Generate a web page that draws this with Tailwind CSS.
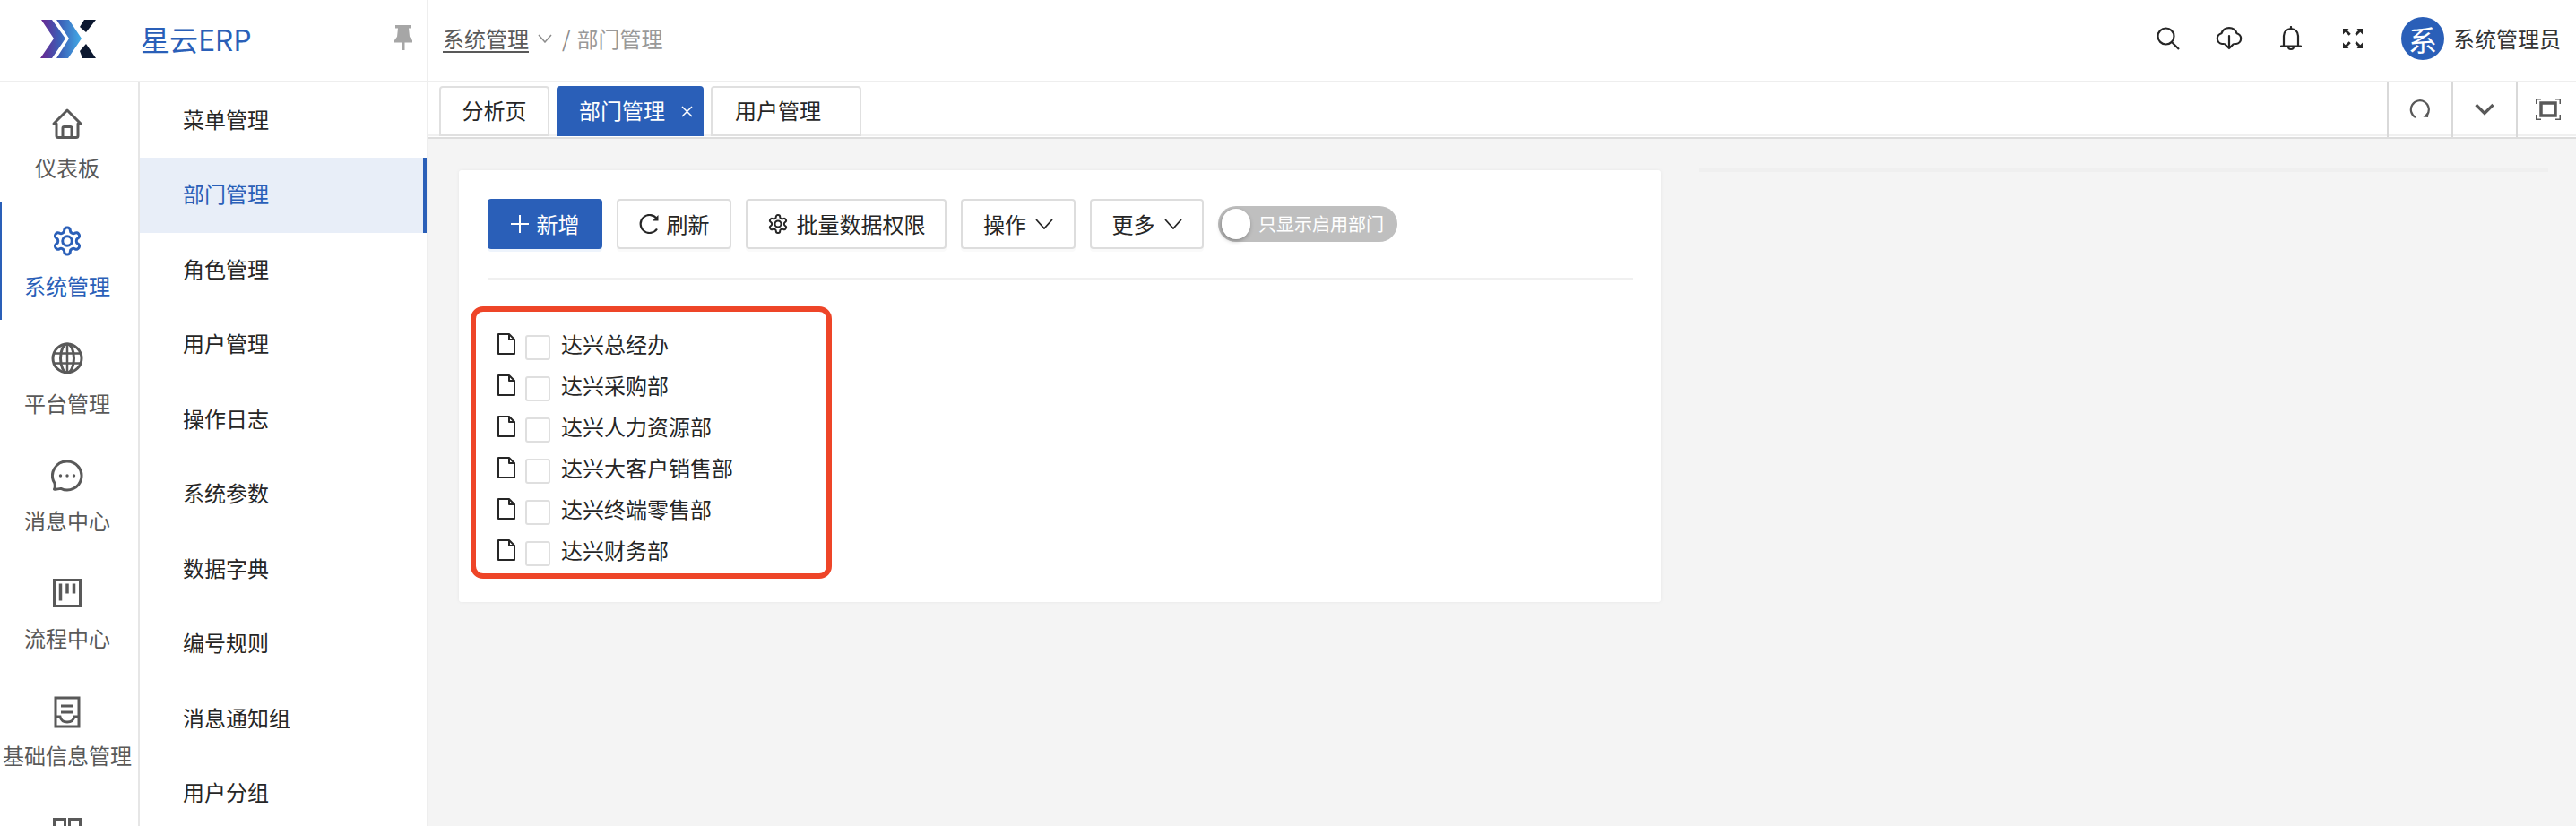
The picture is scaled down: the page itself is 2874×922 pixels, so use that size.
<!DOCTYPE html>
<html lang="zh-CN">
<head>
  <meta charset="UTF-8" />
  <title>星云ERP</title>
  <script src="https://cdn.jsdelivr.net/npm/@tailwindcss/browser@4"></script>
</head>
<body class="bg-white text-[#333] font-['Noto_Sans_CJK_SC','Noto_Sans',sans-serif] h-screen overflow-hidden">
<div class="flex h-[922px] w-[2874px] overflow-hidden">

  <!-- left column: logo + menus -->
  <aside class="w-[476px] shrink-0 flex flex-col">
    <div class="h-[92px] shrink-0 border-b-2 border-[#eeeeee] flex items-center">
      <svg class="ml-[45px] w-[62px] h-[44px] -mt-[4px]" viewBox="45 21 62 44">
        <defs>
          <linearGradient id="logoA" gradientUnits="userSpaceOnUse" x1="45" y1="0" x2="92" y2="0">
            <stop offset="0" stop-color="#6b2590" />
            <stop offset="0.45" stop-color="#3c5db5" />
            <stop offset="1" stop-color="#43b0ea" />
          </linearGradient>
        </defs>
        <polygon fill="url(#logoA)" points="46,22 58,22 73,43 58,65 45,65 60,43" />
        <polygon fill="url(#logoA)" points="63,22 77,22 91,43 76,65 63,65 77,43" />
        <polygon fill="#0c1830" points="94,22 107,22 96,36 89,30" />
        <polygon fill="#0c1830" points="96,49 107,65 92,65 89,57" />
      </svg>
      <span class="ml-[50px] text-[32px] leading-none text-[#2a5fb8] -mt-[4px]">星云ERP</span>
      <svg class="ml-[160px] w-[20px] h-[28px] -mt-[6px]" viewBox="0 0 20 28" fill="#a6a6a6">
        <path d="M1 0h18v3.5h-3l1 9.5 3 4v2.500H11.500V28h-3V19.500H0V17l3-4 1-9.500H1z" />
      </svg>
    </div>
    <div class="flex flex-1 min-h-0">
      <!-- first level -->
      <nav class="w-[156px] shrink-0 border-r-2 border-[#e6e6e6] pt-[3px] text-[#595959] overflow-hidden">
        <a class="h-[131px] flex flex-col items-center pt-[26px] pr-[4px]">
          <svg class="w-[34px] h-[34px]" viewBox="0 0 34 34" fill="none" stroke="#595959" stroke-width="3" stroke-linejoin="round">
            <path d="M17 2 32 17h-3v13.500a2 2 0 0 1-2 2H7a2 2 0 0 1-2-2V17H2z" />
            <path d="M12 32V22a1.500 1.500 0 0 1 1.500-1.500h7A1.500 1.500 0 0 1 22 22v10" />
          </svg>
          <span class="mt-[20px] text-[24px] leading-none whitespace-nowrap">仪表板</span>
        </a>
        <a class="h-[131px] flex flex-col items-center pt-[26px] border-l-2 border-[#2a5fb8] text-[#2a5fb8] pr-[6px]">
          <svg class="w-[36px] h-[36px] -my-[1px]" viewBox="0 0 24 24" fill="none" stroke="#2a5fb8" stroke-width="2" stroke-linejoin="round">
            <path d="M12.220 2h-.44a2 2 0 0 0-2 2v.18a2 2 0 0 1-1 1.730l-.43.25a2 2 0 0 1-2 0l-.15-.08a2 2 0 0 0-2.730.73l-.22.38a2 2 0 0 0 .73 2.730l.15.1a2 2 0 0 1 1 1.720v.51a2 2 0 0 1-1 1.740l-.15.09a2 2 0 0 0-.73 2.730l.22.38a2 2 0 0 0 2.730.73l.15-.08a2 2 0 0 1 2 0l.43.25a2 2 0 0 1 1 1.730V20a2 2 0 0 0 2 2h.44a2 2 0 0 0 2-2v-.18a2 2 0 0 1 1-1.730l.43-.25a2 2 0 0 1 2 0l.15.08a2 2 0 0 0 2.730-.73l.22-.39a2 2 0 0 0-.73-2.730l-.15-.08a2 2 0 0 1-1-1.740v-.5a2 2 0 0 1 1-1.740l.15-.09a2 2 0 0 0 .73-2.730l-.22-.38a2 2 0 0 0-2.730-.73l-.15.08a2 2 0 0 1-2 0l-.43-.25a2 2 0 0 1-1-1.730V4a2 2 0 0 0-2-2z" />
            <circle cx="12" cy="12" r="3.500" />
          </svg>
          <span class="mt-[21px] text-[24px] leading-none whitespace-nowrap">系统管理</span>
        </a>
        <a class="h-[131px] flex flex-col items-center pt-[26px] pr-[4px]">
          <svg class="w-[36px] h-[36px] -my-[1px]" viewBox="0 0 36 36" fill="none" stroke="#595959" stroke-width="3">
            <circle cx="18" cy="18" r="16" />
            <ellipse cx="18" cy="18" rx="7.500" ry="16" />
            <path d="M18 2v32M3.500 12.500h29M3.500 23.500h29" stroke-width="2.500" />
          </svg>
          <span class="mt-[21px] text-[24px] leading-none whitespace-nowrap">平台管理</span>
        </a>
        <a class="h-[131px] flex flex-col items-center pt-[26px] pr-[4px]">
          <svg class="w-[36px] h-[36px] -my-[1px]" viewBox="0 0 36 36" fill="none" stroke="#595959" stroke-width="3" stroke-linejoin="round">
            <path d="M18 2a16 16 0 1 1-7 30.400C8 33 5 33.500 3.500 33c1-1.500 1-3.500.5-6.500A16 16 0 0 1 18 2z" />
            <circle cx="10.500" cy="18" r="1.700" fill="#595959" stroke="none" />
            <circle cx="18" cy="18" r="1.700" fill="#595959" stroke="none" />
            <circle cx="25.500" cy="18" r="1.700" fill="#595959" stroke="none" />
          </svg>
          <span class="mt-[21px] text-[24px] leading-none whitespace-nowrap">消息中心</span>
        </a>
        <a class="h-[131px] flex flex-col items-center pt-[26px] pr-[4px]">
          <svg class="w-[34px] h-[34px]" viewBox="0 0 34 34" fill="none" stroke="#595959" stroke-width="3">
            <rect x="2.500" y="2.500" width="29" height="29" />
            <path d="M9.500 6.500v19M17 6.500v11M24.500 6.500v11" stroke-width="3.500" />
          </svg>
          <span class="mt-[21px] text-[24px] leading-none whitespace-nowrap">流程中心</span>
        </a>
        <a class="h-[131px] flex flex-col items-center pt-[28px] pr-[4px]">
          <svg class="w-[34px] h-[36px] -my-[1px]" viewBox="0 0 34 36" fill="none" stroke="#595959" stroke-width="3">
            <rect x="4" y="2" width="26" height="32" />
            <path d="M10 11h14M10 18h14" />
            <path d="M4 23h5c1 4 4 6 8 6s7-2 8-6h5" />
          </svg>
          <span class="mt-[19px] text-[24px] leading-none whitespace-nowrap">基础信息管理</span>
        </a>
        <a class="h-[131px] flex flex-col items-center pt-[31px] pr-[4px]">
          <svg class="w-[34px] h-[34px]" viewBox="0 0 34 34" fill="none" stroke="#595959" stroke-width="3">
            <rect x="2.500" y="2.500" width="12" height="12" />
            <rect x="19.500" y="2.500" width="12" height="12" />
          </svg>
        </a>
      </nav>
      <!-- second level -->
      <ul class="w-[320px] shrink-0 text-[24px] leading-none text-[#262626] overflow-hidden">
        <li class="h-[84px] flex items-center pl-[48px] pb-[3px]">菜单管理</li>
        <li class="h-[83.500px] flex items-center pl-[48px] pb-[3px] bg-[#e8eef8] text-[#2a5fb8] border-r-4 border-[#2a5fb8]">部门管理</li>
        <li class="h-[83.500px] flex items-center pl-[48px] pb-[3px]">角色管理</li>
        <li class="h-[83.500px] flex items-center pl-[48px] pb-[3px]">用户管理</li>
        <li class="h-[83.500px] flex items-center pl-[48px] pb-[3px]">操作日志</li>
        <li class="h-[83.500px] flex items-center pl-[48px] pb-[3px]">系统参数</li>
        <li class="h-[83.500px] flex items-center pl-[48px] pb-[3px]">数据字典</li>
        <li class="h-[83.500px] flex items-center pl-[48px] pb-[3px]">编号规则</li>
        <li class="h-[83.500px] flex items-center pl-[48px] pb-[3px]">消息通知组</li>
        <li class="h-[83.500px] flex items-center pl-[48px] pb-[3px]">用户分组</li>
      </ul>
    </div>
  </aside>

  <!-- right column -->
  <main class="flex-1 min-w-0 flex flex-col border-l-2 border-[#eeeeee]">
    <header class="h-[92px] shrink-0 border-b-2 border-[#eeeeee] flex items-center text-[24px] leading-none">
      <div class="flex items-center ml-[16px] -mt-[5px]">
        <span class="text-[#595959] underline underline-offset-4">系统管理</span>
        <svg class="ml-[10px] w-[16px] h-[10px]" viewBox="0 0 16 10" fill="none" stroke="#8c8c8c" stroke-width="1.500"><path d="M1 1l7 8 7-8" /></svg>
        <span class="ml-[11px] text-[#8c8c8c]">/</span>
        <span class="ml-[7px] text-[#999999]">部门管理</span>
      </div>
      <div class="ml-auto flex items-center -mt-[4px]">
        <svg class="w-[26px] h-[26px]" viewBox="0 0 26 26" fill="none" stroke="#262626" stroke-width="2.200">
          <circle cx="10.500" cy="10.500" r="9" />
          <path d="M17 17l8 8" />
        </svg>
        <svg class="ml-[40px] w-[30px] h-[26px]" viewBox="0 0 30 26" fill="none" stroke="#262626" stroke-width="2.200" stroke-linecap="round" stroke-linejoin="round">
          <path d="M9 19H7a6 6 0 0 1-.5-11.800A9 9 0 0 1 23.500 7.200 6 6 0 0 1 23 19h-2" />
          <path d="M15 10v14M10.500 19.500 15 24l4.500-4.500" />
        </svg>
        <svg class="ml-[42px] w-[24px] h-[28px]" viewBox="0 0 24 28" fill="none" stroke="#262626" stroke-width="2.200" stroke-linecap="round">
          <path d="M1 22.500h22M4 22.500V11a8 8 0 0 1 16 0v11.500" />
          <path d="M12 1v2" />
          <path d="M9 23a3 3 0 0 0 6 0" />
        </svg>
        <svg class="ml-[46px] w-[22px] h-[22px]" viewBox="0 0 22 22" fill="#262626">
          <path d="M0 0h6.500L4.700 1.800l4 4-2 2-4-4L0 6.500zM22 0v6.500l-2.700-2.700-4 4-2-2 4-4L15.500 0zM0 22v-6.500l2.700 2.700 4-4 2 2-4 4L6.500 22zM22 22h-6.500l1.800-1.800-4-4 2-2 4 4 2.700-2.700z" />
        </svg>
        <div class="ml-[43px] w-[48px] h-[48px] rounded-full bg-[#2a5fb8] text-white text-[32px] leading-none flex items-center justify-center">系</div>
        <span class="ml-[10px] mr-[17px] text-[#333333]">系统管理员</span>
      </div>
    </header>

    <!-- tabs -->
    <div class="h-[63px] shrink-0 border-b-2 border-[#dddddd]">
      <div class="h-[60px] border-b-2 border-[#f0f0f0] flex text-[24px] leading-none">
        <div class="flex gap-[8px] pl-[12px] pt-[4px] h-[60px] text-[#262626]">
          <div class="w-[123px] h-[56px] border-2 border-[#e0e0e0] rounded-t-[4px] bg-white flex items-center justify-center pb-[3px]">分析页</div>
          <div class="w-[164px] h-[56px] rounded-t-[4px] bg-[#2a5fb8] text-white flex items-center pl-[25px] pb-[3px]">
            部门管理
            <svg class="ml-[18px] mt-[4px] w-[13px] h-[13px]" viewBox="0 0 13 13" fill="none" stroke="#ffffff" stroke-width="1.500"><path d="M1 1l11 11M12 1 1 12" /></svg>
          </div>
          <div class="w-[168px] h-[56px] border-2 border-[#e0e0e0] rounded-t-[4px] bg-white flex items-center pl-[25px] pb-[3px]">用户管理</div>
        </div>
        <div class="ml-auto flex pt-[2px] h-[61px]">
          <div class="w-[72px] border-l-2 border-[#d9d9d9] flex items-center justify-center -mt-[2px] pb-[2px]">
            <svg class="w-[24px] h-[24px]" viewBox="0 0 24 24" fill="none" stroke="#595959" stroke-width="2.200">
              <path d="M7 21A10 10 0 1 1 20 18" />
              <path d="M21.500 14.500 21 21l-5.500-.5z" fill="#595959" stroke="none" />
            </svg>
          </div>
          <div class="w-[72px] border-l-2 border-[#d9d9d9] flex items-center justify-center -mt-[2px] pb-[2px]">
            <svg class="w-[22px] h-[14px]" viewBox="0 0 22 14" fill="none" stroke="#595959" stroke-width="3.200"><path d="M1.500 2 11 11.500 20.500 2" /></svg>
          </div>
          <div class="w-[67px] border-l-2 border-[#d9d9d9] flex items-center pl-[20px] -mt-[2px] pb-[2px]">
            <svg class="w-[28px] h-[24px]" viewBox="0 0 28 24" fill="none" stroke="#595959" stroke-width="1.500">
              <path d="M.750 6V.750H6M22 .750h5.250V6M27.250 18v5.250H22M6 23.250H.750V18" />
              <rect x="6" y="5" width="16" height="14" stroke-width="3.500" />
            </svg>
          </div>
        </div>
      </div>
    </div>

    <!-- content -->
    <div class="flex-1 min-h-0 bg-[#f4f4f4] flex items-start gap-[42px] pl-[34px] pt-[35px]">
      <section class="relative w-[1341px] h-[482px] shrink-0 bg-white rounded-[3px] shadow-[0_0_4px_rgba(0,0,0,0.06)] px-[32px] pt-[32px]">
        <div class="flex items-center gap-[16px] text-[24px] leading-none text-[#262626] pb-[32px] border-b-2 border-[#f0f0f0] mr-[-1px]">
          <button class="w-[128px] h-[56px] rounded-[4px] bg-[#2a5fb8] text-white flex items-center justify-center gap-[9px] shadow-[0_3px_0_#eef4fc]">
            <svg class="w-[20px] h-[20px]" viewBox="0 0 20 20" stroke="#ffffff" stroke-width="2"><path d="M10 0v20M0 10h20" /></svg>
            新增
          </button>
          <button class="w-[128px] h-[56px] rounded-[4px] border-2 border-[#dddddd] flex items-center justify-center gap-[9px] shadow-[0_3px_0_#fafafa]">
            <svg class="w-[22px] h-[22px]" viewBox="0 0 22 22" fill="none" stroke="#262626" stroke-width="2.200"><path d="M20 5.500A10 10 0 1 0 20 16.500" /><path d="M21.500 1v6.500H15z" fill="#262626" stroke="none" /></svg>
            刷新
          </button>
          <button class="w-[224px] h-[56px] rounded-[4px] border-2 border-[#dddddd] flex items-center justify-center gap-[9px] shadow-[0_3px_0_#fafafa]">
            <svg class="w-[24px] h-[24px]" viewBox="0 0 24 24" fill="none" stroke="#262626" stroke-width="2" stroke-linejoin="round">
              <path d="M12.220 2h-.44a2 2 0 0 0-2 2v.18a2 2 0 0 1-1 1.730l-.43.25a2 2 0 0 1-2 0l-.15-.08a2 2 0 0 0-2.730.73l-.22.38a2 2 0 0 0 .73 2.730l.15.1a2 2 0 0 1 1 1.720v.51a2 2 0 0 1-1 1.740l-.15.09a2 2 0 0 0-.73 2.730l.22.38a2 2 0 0 0 2.730.73l.15-.08a2 2 0 0 1 2 0l.43.25a2 2 0 0 1 1 1.730V20a2 2 0 0 0 2 2h.44a2 2 0 0 0 2-2v-.18a2 2 0 0 1 1-1.730l.43-.25a2 2 0 0 1 2 0l.15.08a2 2 0 0 0 2.730-.73l.22-.39a2 2 0 0 0-.73-2.730l-.15-.08a2 2 0 0 1-1-1.740v-.5a2 2 0 0 1 1-1.740l.15-.09a2 2 0 0 0 .73-2.730l-.22-.38a2 2 0 0 0-2.730-.73l-.15.08a2 2 0 0 1-2 0l-.43-.25a2 2 0 0 1-1-1.730V4a2 2 0 0 0-2-2z" />
              <circle cx="12" cy="12" r="3.500" />
            </svg>
            批量数据权限
          </button>
          <button class="w-[128px] h-[56px] rounded-[4px] border-2 border-[#dddddd] flex items-center justify-center gap-[10px] shadow-[0_3px_0_#fafafa]">
            操作
            <svg class="w-[20px] h-[12px]" viewBox="0 0 20 12" fill="none" stroke="#262626" stroke-width="1.800"><path d="M1 1l9 10 9-10" /></svg>
          </button>
          <button class="w-[127px] h-[56px] rounded-[4px] border-2 border-[#dddddd] flex items-center justify-center gap-[10px] shadow-[0_3px_0_#fafafa]">
            更多
            <svg class="w-[20px] h-[12px]" viewBox="0 0 20 12" fill="none" stroke="#262626" stroke-width="1.800"><path d="M1 1l9 10 9-10" /></svg>
          </button>
          <div class="w-[200px] h-[40px] rounded-full bg-[#bfbfbf] flex items-center pl-[4px] text-white text-[20px]">
            <span class="w-[32px] h-[34px] rounded-full bg-white shadow-[-1px_2px_5px_rgba(0,0,0,0.3)]"></span>
            <span class="ml-[9px] whitespace-nowrap">只显示启用部门</span>
          </div>
        </div>

        <ul class="pt-[50px] pl-[11px] text-[24px] leading-none text-[#262626]">
          <li class="h-[46px] flex items-center">
            <svg class="w-[20px] h-[24px] -mt-[2px]" viewBox="0 0 20 24" fill="none" stroke="#262626" stroke-width="2" stroke-linejoin="round"><path d="M1 1h12l6 6v16H1zM13 1v6h6" /></svg>
            <span class="ml-[11px] mt-[6px] w-[28px] h-[28px] rounded-[3px] border-2 border-[#dfdfdf]"></span>
            <span class="ml-[12px] pb-[2px]">达兴总经办</span>
          </li>
          <li class="h-[46px] flex items-center">
            <svg class="w-[20px] h-[24px] -mt-[2px]" viewBox="0 0 20 24" fill="none" stroke="#262626" stroke-width="2" stroke-linejoin="round"><path d="M1 1h12l6 6v16H1zM13 1v6h6" /></svg>
            <span class="ml-[11px] mt-[6px] w-[28px] h-[28px] rounded-[3px] border-2 border-[#dfdfdf]"></span>
            <span class="ml-[12px] pb-[2px]">达兴采购部</span>
          </li>
          <li class="h-[46px] flex items-center">
            <svg class="w-[20px] h-[24px] -mt-[2px]" viewBox="0 0 20 24" fill="none" stroke="#262626" stroke-width="2" stroke-linejoin="round"><path d="M1 1h12l6 6v16H1zM13 1v6h6" /></svg>
            <span class="ml-[11px] mt-[6px] w-[28px] h-[28px] rounded-[3px] border-2 border-[#dfdfdf]"></span>
            <span class="ml-[12px] pb-[2px]">达兴人力资源部</span>
          </li>
          <li class="h-[46px] flex items-center">
            <svg class="w-[20px] h-[24px] -mt-[2px]" viewBox="0 0 20 24" fill="none" stroke="#262626" stroke-width="2" stroke-linejoin="round"><path d="M1 1h12l6 6v16H1zM13 1v6h6" /></svg>
            <span class="ml-[11px] mt-[6px] w-[28px] h-[28px] rounded-[3px] border-2 border-[#dfdfdf]"></span>
            <span class="ml-[12px] pb-[2px]">达兴大客户销售部</span>
          </li>
          <li class="h-[46px] flex items-center">
            <svg class="w-[20px] h-[24px] -mt-[2px]" viewBox="0 0 20 24" fill="none" stroke="#262626" stroke-width="2" stroke-linejoin="round"><path d="M1 1h12l6 6v16H1zM13 1v6h6" /></svg>
            <span class="ml-[11px] mt-[6px] w-[28px] h-[28px] rounded-[3px] border-2 border-[#dfdfdf]"></span>
            <span class="ml-[12px] pb-[2px]">达兴终端零售部</span>
          </li>
          <li class="h-[46px] flex items-center">
            <svg class="w-[20px] h-[24px] -mt-[2px]" viewBox="0 0 20 24" fill="none" stroke="#262626" stroke-width="2" stroke-linejoin="round"><path d="M1 1h12l6 6v16H1zM13 1v6h6" /></svg>
            <span class="ml-[11px] mt-[6px] w-[28px] h-[28px] rounded-[3px] border-2 border-[#dfdfdf]"></span>
            <span class="ml-[12px] pb-[2px]">达兴财务部</span>
          </li>
        </ul>

        <!-- annotation box drawn over the tree -->
        <div class="absolute left-[13px] top-[152px] w-[403px] h-[304px] border-[6px] border-[#ee4528] rounded-[14px] pointer-events-none"></div>
      </section>
      <div class="w-[948px] h-[4px] -mt-[2px] bg-[#efefef]"></div>
    </div>
  </main>
</div>
</body>
</html>
